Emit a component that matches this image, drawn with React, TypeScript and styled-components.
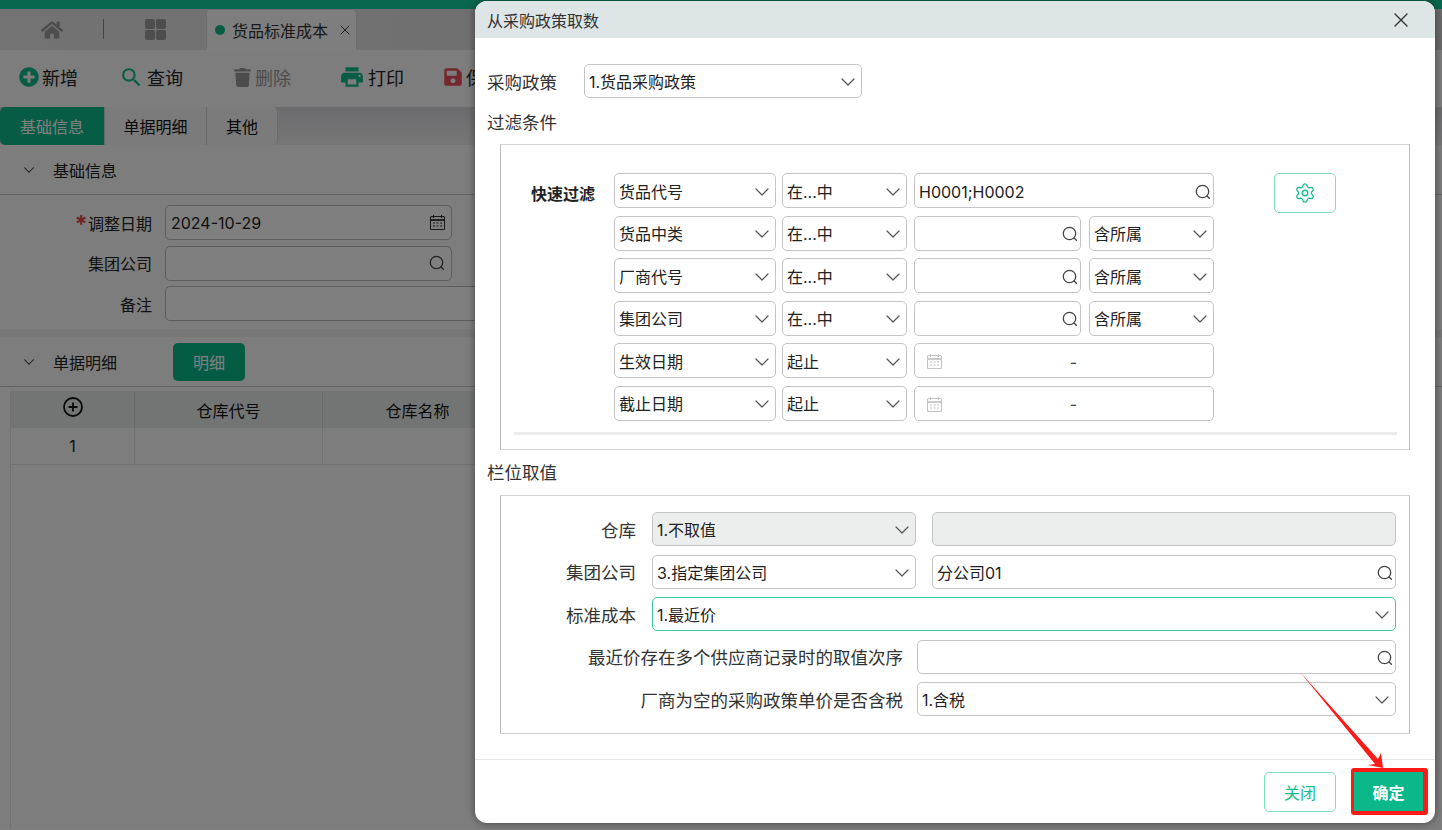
import React from 'react';
import styled, { createGlobalStyle } from 'styled-components';
import { ChevronDown, Settings, X } from 'lucide-react';
import { FaHome, FaPlusCircle, FaSave, FaTrash } from 'react-icons/fa';
import { MdPrint, MdSearch } from 'react-icons/md';

const GlobalStyle = createGlobalStyle`
  html, body {
    margin: 0;
    padding: 0;
    width: 1442px;
    height: 830px;
    overflow: hidden;
    background: #fff;
  }
  * { box-sizing: border-box; }
  body {
    font-family: Inter, "Noto Sans CJK SC", "Noto Sans", sans-serif;
    color: #222;
  }
`;

const Page = styled.div`
  position: relative;
  width: 1442px;
  height: 830px;
  overflow: hidden;
`;

const TopBar = styled.div`
  height: 9px;
  background: #14cf9e;
`;

const TabStrip = styled.div`
  display: flex;
  align-items: stretch;
  height: 41px;
  background: linear-gradient(90deg, #e6e6e6, #d6d6d6);
`;

const StripCell = styled.div`
  width: 103px;
  display: flex;
  align-items: center;
  justify-content: center;
  color: #9a9a9a;
  font-size: 22px;
`;

const StripDivider = styled.div`
  width: 1px;
  height: 20px;
  margin-top: 10px;
  background: #8a8a8a;
`;

const GridIcon = styled.div`
  display: grid;
  grid-template-columns: 10px 10px;
  gap: 1px;

  span {
    height: 10px;
    border-radius: 2px;
    background: #9a9a9a;
  }
`;

const ActiveTab = styled.div`
  width: 151px;
  margin-left: -1px;
  display: flex;
  align-items: center;
  gap: 7px;
  padding-left: 8px;
  background: #fcfcfc;
  border: 1px solid #ddd;
  border-bottom: none;
  border-radius: 4px 4px 0 0;
  font-size: 16px;
  color: #333;
`;

const Dot = styled.span`
  width: 10px;
  height: 10px;
  border-radius: 50%;
  background: #0fb98a;
`;

const TabClose = styled.span`
  display: flex;
  margin-left: 2px;
`;

const Toolbar = styled.div`
  display: flex;
  align-items: center;
  height: 57px;
  padding-bottom: 3px;
  background: #fafafa;
`;

const ToolButton = styled.div<{ $width: number; $disabled?: boolean }>`
  width: ${p => p.$width}px;
  display: flex;
  align-items: center;
  gap: 3px;
  font-size: 18px;
  color: ${p => (p.$disabled ? '#999' : '#222')};
  white-space: nowrap;

  &:first-child { margin-left: 19px; }
`;

const ToolIcon = styled.span<{ $color: string }>`
  display: flex;
  color: ${p => p.$color};
`;

const TabRow = styled.div`
  display: flex;
  height: 38px;
  background: linear-gradient(180deg, #d8d8dc, #eeeef0);
`;

const SubTab = styled.div<{ $width: number; $active?: boolean }>`
  width: ${p => p.$width}px;
  display: flex;
  align-items: center;
  justify-content: center;
  font-size: 16px;
  background: ${p => (p.$active ? '#0fb98a' : '#f6f6f6')};
  color: ${p => (p.$active ? '#fff' : '#111')};
  border-right: 1px solid #d4d4d4;
  border-radius: ${p => (p.$active ? '5px 0 0 5px' : '0')};

  &:last-child { border-radius: 0 5px 5px 0; }
`;

const SectionHead = styled.div`
  display: flex;
  align-items: center;
  height: 50px;
  padding-left: 20px;
  gap: 15px;
  font-size: 16px;
  color: #222;
  background: #fafafa;
  border-bottom: 1px solid #c8c8c8;
`;

const DetailButton = styled.div`
  width: 72px;
  height: 38px;
  margin-left: 41px;
  display: flex;
  align-items: center;
  justify-content: center;
  border-radius: 5px;
  background: #0ab88a;
  color: #fff;
  font-size: 16px;
`;

const FormArea = styled.div`
  display: flex;
  flex-direction: column;
  gap: 5.5px;
  height: 142px;
  padding-top: 10px;
  background: #fafafa;
  border-bottom: 8px solid #eeeef0;
`;

const FormRow = styled.div`
  display: flex;
  align-items: center;
  gap: 13px;
  height: 35px;
`;

const FormLabel = styled.div`
  width: 152px;
  text-align: right;
  font-size: 16px;
  color: #222;

  em {
    color: #e04848;
    font-style: normal;
    font-weight: 700;
    font-size: 24px;
    line-height: 0;
    vertical-align: -3px;
  }
`;

const PageInput = styled.div<{ $wide?: boolean }>`
  width: ${p => (p.$wide ? '800px' : '287px')};
  height: 35px;
  display: flex;
  align-items: center;
  justify-content: space-between;
  padding: 0 5px;
  background: #fff;
  border: 1px solid #bbb;
  border-radius: 5px;
  font-size: 16px;
  color: #222;
`;

const TableArea = styled.div`
  padding: 4px 0 0 10px;
  height: 442px;
  background: #fafafa;
`;

const GridTable = styled.div`
  display: grid;
  grid-template-columns: 124px 188px 190px 300px;
  grid-auto-rows: 37px;
  border-left: 1px solid #e2e2e2;
  height: 100%;
`;

const HeadCell = styled.div`
  display: flex;
  align-items: center;
  justify-content: center;
  background: #e6e9e9;
  border-right: 1px solid #cfd3dc;
  font-size: 16px;
  color: #111;
`;

const AddGlyph = styled.svg`
  margin-top: -6px;
`;

const BodyCell = styled.div`
  display: flex;
  align-items: center;
  justify-content: center;
  border-right: 1px solid #e2e2e2;
  border-bottom: 1px solid #e2e2e2;
  font-size: 16px;
  color: #222;
`;

const Overlay = styled.div`
  position: absolute;
  inset: 0;
  background: rgba(0, 0, 0, 0.5);
`;

const Modal = styled.div`
  position: absolute;
  left: 475px;
  top: 1px;
  width: 960px;
  height: 822px;
  display: flex;
  flex-direction: column;
  background: #fff;
  border-radius: 12px;
  overflow: hidden;
  box-shadow: 0 0 8px rgba(0, 0, 0, 0.45);
`;

const ModalHeader = styled.div`
  flex: none;
  height: 37px;
  display: flex;
  align-items: center;
  justify-content: space-between;
  padding: 0 22px 0 12px;
  background: #dde5e7;
  font-size: 16px;
  color: #333;
`;

const ModalBody = styled.div`
  flex: 1;
  padding: 26px 25px 0 12px;
`;

const PolicyRow = styled.div`
  display: flex;
  align-items: center;
  gap: 27px;
  font-size: 17.5px;
  color: #333;
`;

const GroupTitle = styled.div<{ $top: number }>`
  margin: ${p => p.$top}px 0 0;
  height: 24px;
  line-height: 24px;
  font-size: 17.5px;
  color: #333;
`;

const GroupBox = styled.div`
  margin-left: 13px;
  border: 1px solid #bbb;
  border-top-color: #d4d4d4;
  border-bottom-color: #d4d4d4;
`;

const FilterBox = styled(GroupBox)`
  height: 306px;
  margin-top: 9px;
  padding: 28px 12px 0 13px;
`;

const FilterLayout = styled.div`
  display: flex;
  align-items: flex-start;
`;

const QuickLabel = styled.div`
  width: 100px;
  padding: 8px 0 0 17px;
  font-size: 16px;
  font-weight: 700;
  color: #222;
`;

const FilterRows = styled.div`
  display: flex;
  flex-direction: column;
  gap: 7.5px;
`;

const FilterRow = styled.div`
  display: flex;
  height: 35px;
  gap: 6px;
`;

const GearButton = styled.div`
  width: 62px;
  height: 40px;
  margin-left: 60px;
  display: flex;
  align-items: center;
  justify-content: center;
  border: 1px solid #7fdcc0;
  border-radius: 5px;
  color: #12bd8f;
`;

const Rule = styled.div`
  height: 3px;
  margin: 11px 0 0 0;
  background: #ececec;
`;

const ValueBox = styled(GroupBox)`
  height: 239px;
  margin-top: 10px;
  padding: 16px 13px 0 0;
  display: flex;
  flex-direction: column;
  gap: 8.5px;
`;

const ValueRow = styled.div`
  display: flex;
  align-items: center;
  height: 34px;
`;

const ValueLabel = styled.div<{ $width: number; $gap: number }>`
  flex: none;
  width: ${p => p.$width}px;
  margin-right: ${p => p.$gap}px;
  text-align: right;
  font-size: 17.5px;
  color: #333;
  white-space: nowrap;
`;

const Field = styled.div<{ $width?: number; $grey?: boolean; $focus?: boolean; $gap?: number; $date?: boolean }>`
  ${p => (p.$width ? `width: ${p.$width}px; flex: none;` : 'flex: 1;')}
  ${p => (p.$gap ? `margin-left: ${p.$gap}px;` : '')}
  height: 100%;
  display: flex;
  align-items: center;
  justify-content: space-between;
  padding: 2px 1px 0 ${p => (p.$date ? 11 : 4)}px;
  background: ${p => (p.$grey ? '#eceeee' : '#fff')};
  border: 1.5px solid ${p => (p.$focus ? '#3cc8a0' : '#c4c4c4')};
  border-radius: 5px;
  font-size: 16px;
  line-height: 20px;
  color: #222;
  white-space: nowrap;
`;

const PolicyField = styled.div`
  height: 34px;
  display: flex;
`;

const DateDash = styled.span`
  flex: 1;
  padding-right: 8px;
  text-align: center;
  color: #444;
`;

const ModalFooter = styled.div`
  flex: none;
  height: 64px;
  display: flex;
  align-items: center;
  justify-content: flex-end;
  gap: 15px;
  padding: 0 7px 0 0;
  border-top: 1px solid #e6e6e6;
`;

const CloseButton = styled.div`
  width: 72px;
  height: 40px;
  display: flex;
  align-items: center;
  justify-content: center;
  border: 1px solid #7fdcc0;
  border-radius: 5px;
  color: #12bd8f;
  font-size: 16px;
`;

const ConfirmMark = styled.div`
  width: 77px;
  height: 47px;
  border-style: solid;
  border-color: #fb1a16;
  border-width: 4px 5px 4px 3px;
  border-radius: 3px;
  display: flex;
  background: #fff;
`;

const ConfirmButton = styled.div`
  flex: 1;
  display: flex;
  align-items: center;
  justify-content: center;
  background: #0ab88a;
  color: #fff;
  font-size: 16px;
  font-weight: 700;
`;

const ArrowMark = styled.svg`
  position: absolute;
  left: 1295px;
  top: 665px;
  pointer-events: none;
`;

const SearchGlyph = () => (
  <svg width="18" height="18" viewBox="0 0 18 18" fill="none" stroke="#444" strokeWidth="1.3" strokeLinecap="round">
    <circle cx="8.5" cy="8.5" r="6.2" />
    <path d="M13 13l2.4 2.2" />
  </svg>
);

const CalendarGlyph = ({ color }: { color: string }) => (
  <svg width="17" height="17" viewBox="0 0 17 17" fill="none" stroke={color} strokeWidth="1.1">
    <rect x="1.5" y="2.5" width="14" height="13" rx="1" />
    <path d="M1.5 6h14" strokeWidth="1.8" />
    <path d="M4.5 1v3M12.5 1v3" />
    <path d="M4 9h2M7.5 9h2M11 9h2M4 12h2M7.5 12h2M11 12h2" />
  </svg>
);

const Chevron = () => <ChevronDown size={24} color="#555" strokeWidth={1.2} />;

const SelectField = (props: { text: string; width?: number; grey?: boolean; focus?: boolean; gap?: number }) => (
  <Field $width={props.width} $grey={props.grey} $focus={props.focus} $gap={props.gap}>
    <span>{props.text}</span>
    <Chevron />
  </Field>
);

const SearchField = (props: { text?: string; width?: number; gap?: number }) => (
  <Field $width={props.width} $gap={props.gap}>
    <span>{props.text}</span>
    <SearchGlyph />
  </Field>
);

const DateField = () => (
  <Field $width={300} $date $gap={1}>
    <CalendarGlyph color="#c4c4c4" />
    <DateDash>-</DateDash>
  </Field>
);

const filterRows = [
  { name: '货品代号', op: '在...中', value: 'H0001;H0002', kind: 'wide' },
  { name: '货品中类', op: '在...中', kind: 'belong' },
  { name: '厂商代号', op: '在...中', kind: 'belong' },
  { name: '集团公司', op: '在...中', kind: 'belong' },
  { name: '生效日期', op: '起止', kind: 'date' },
  { name: '截止日期', op: '起止', kind: 'date' },
];

const App: React.FC = () => (
  <Page>
    <GlobalStyle />
    <TopBar />
    <TabStrip>
      <StripCell><FaHome /></StripCell>
      <StripDivider />
      <StripCell>
        <GridIcon><span /><span /><span /><span /></GridIcon>
      </StripCell>
      <ActiveTab>
        <Dot />
        货品标准成本
        <TabClose><X size={16} color="#333" strokeWidth={1.4} /></TabClose>
      </ActiveTab>
    </TabStrip>
    <Toolbar>
      <ToolButton $width={100}><ToolIcon $color="#0fb98a"><FaPlusCircle size={20} /></ToolIcon>新增</ToolButton>
      <ToolButton $width={114}><ToolIcon $color="#0fb98a"><MdSearch size={25} /></ToolIcon>查询</ToolButton>
      <ToolButton $width={106} $disabled><ToolIcon $color="#999"><FaTrash size={19} /></ToolIcon>删除</ToolButton>
      <ToolButton $width={104}><ToolIcon $color="#0fb98a"><MdPrint size={26} /></ToolIcon>打印</ToolButton>
      <ToolButton $width={100}><ToolIcon $color="#e8505b"><FaSave size={20} /></ToolIcon>保存</ToolButton>
    </Toolbar>
    <TabRow>
      <SubTab $width={105} $active>基础信息</SubTab>
      <SubTab $width={102}>单据明细</SubTab>
      <SubTab $width={71}>其他</SubTab>
    </TabRow>
    <SectionHead>
      <ChevronDown size={18} color="#333" strokeWidth={1.4} />
      基础信息
    </SectionHead>
    <FormArea>
      <FormRow>
        <FormLabel><em>*</em>调整日期</FormLabel>
        <PageInput>2024-10-29<CalendarGlyph color="#333" /></PageInput>
      </FormRow>
      <FormRow>
        <FormLabel>集团公司</FormLabel>
        <PageInput><span /><SearchGlyph /></PageInput>
      </FormRow>
      <FormRow>
        <FormLabel>备注</FormLabel>
        <PageInput $wide />
      </FormRow>
    </FormArea>
    <SectionHead>
      <ChevronDown size={18} color="#333" strokeWidth={1.4} />
      单据明细
      <DetailButton>明细</DetailButton>
    </SectionHead>
    <TableArea>
      <GridTable>
        <HeadCell>
          <AddGlyph width="22" height="22" viewBox="0 0 22 22" fill="none" stroke="#111" strokeWidth="1.8">
            <circle cx="11" cy="11" r="9" />
            <path d="M11 6.5v9M6.5 11h9" />
          </AddGlyph>
        </HeadCell>
        <HeadCell>仓库代号</HeadCell>
        <HeadCell>仓库名称</HeadCell>
        <HeadCell />
        <BodyCell>1</BodyCell>
        <BodyCell />
        <BodyCell />
        <BodyCell />
      </GridTable>
    </TableArea>

    <Overlay />
    <Modal>
      <ModalHeader>
        从采购政策取数
        <X size={24} color="#333" strokeWidth={1.4} />
      </ModalHeader>
      <ModalBody>
        <PolicyRow>
          采购政策
          <PolicyField><SelectField text="1.货品采购政策" width={278} /></PolicyField>
        </PolicyRow>
        <GroupTitle $top={13}>过滤条件</GroupTitle>
        <FilterBox>
          <FilterLayout>
            <QuickLabel>快速过滤</QuickLabel>
            <FilterRows>
              {filterRows.map(row => (
                <FilterRow key={row.name}>
                  <SelectField text={row.name} width={162} />
                  <SelectField text={row.op} width={125} />
                  {row.kind === 'wide' && <SearchField text={row.value} width={300} gap={1} />}
                  {row.kind === 'belong' && (
                    <>
                      <SearchField width={167} gap={1} />
                      <SelectField text="含所属" width={125} gap={2} />
                    </>
                  )}
                  {row.kind === 'date' && <DateField />}
                </FilterRow>
              ))}
            </FilterRows>
            <GearButton><Settings size={22} strokeWidth={1.4} /></GearButton>
          </FilterLayout>
          <Rule />
        </FilterBox>
        <GroupTitle $top={11}>栏位取值</GroupTitle>
        <ValueBox>
          <ValueRow>
            <ValueLabel $width={135} $gap={16}>仓库</ValueLabel>
            <SelectField text="1.不取值" width={264} grey />
            <Field $grey $gap={16} />
          </ValueRow>
          <ValueRow>
            <ValueLabel $width={135} $gap={16}>集团公司</ValueLabel>
            <SelectField text="3.指定集团公司" width={264} />
            <SearchField text="分公司01" gap={16} />
          </ValueRow>
          <ValueRow>
            <ValueLabel $width={135} $gap={16}>标准成本</ValueLabel>
            <SelectField text="1.最近价" focus />
          </ValueRow>
          <ValueRow>
            <ValueLabel $width={402} $gap={14}>最近价存在多个供应商记录时的取值次序</ValueLabel>
            <SearchField />
          </ValueRow>
          <ValueRow>
            <ValueLabel $width={402} $gap={14}>厂商为空的采购政策单价是否含税</ValueLabel>
            <SelectField text="1.含税" />
          </ValueRow>
        </ValueBox>
      </ModalBody>
      <ModalFooter>
        <CloseButton>关闭</CloseButton>
        <ConfirmMark><ConfirmButton>确定</ConfirmButton></ConfirmMark>
      </ModalFooter>
    </Modal>
    <ArrowMark width="100" height="110" viewBox="0 0 100 110">
      <path d="M5 7L83 94L86 88L88 103L73 100L80 99Z" fill="#fb1a16" />
    </ArrowMark>
  </Page>
);

export default App;
